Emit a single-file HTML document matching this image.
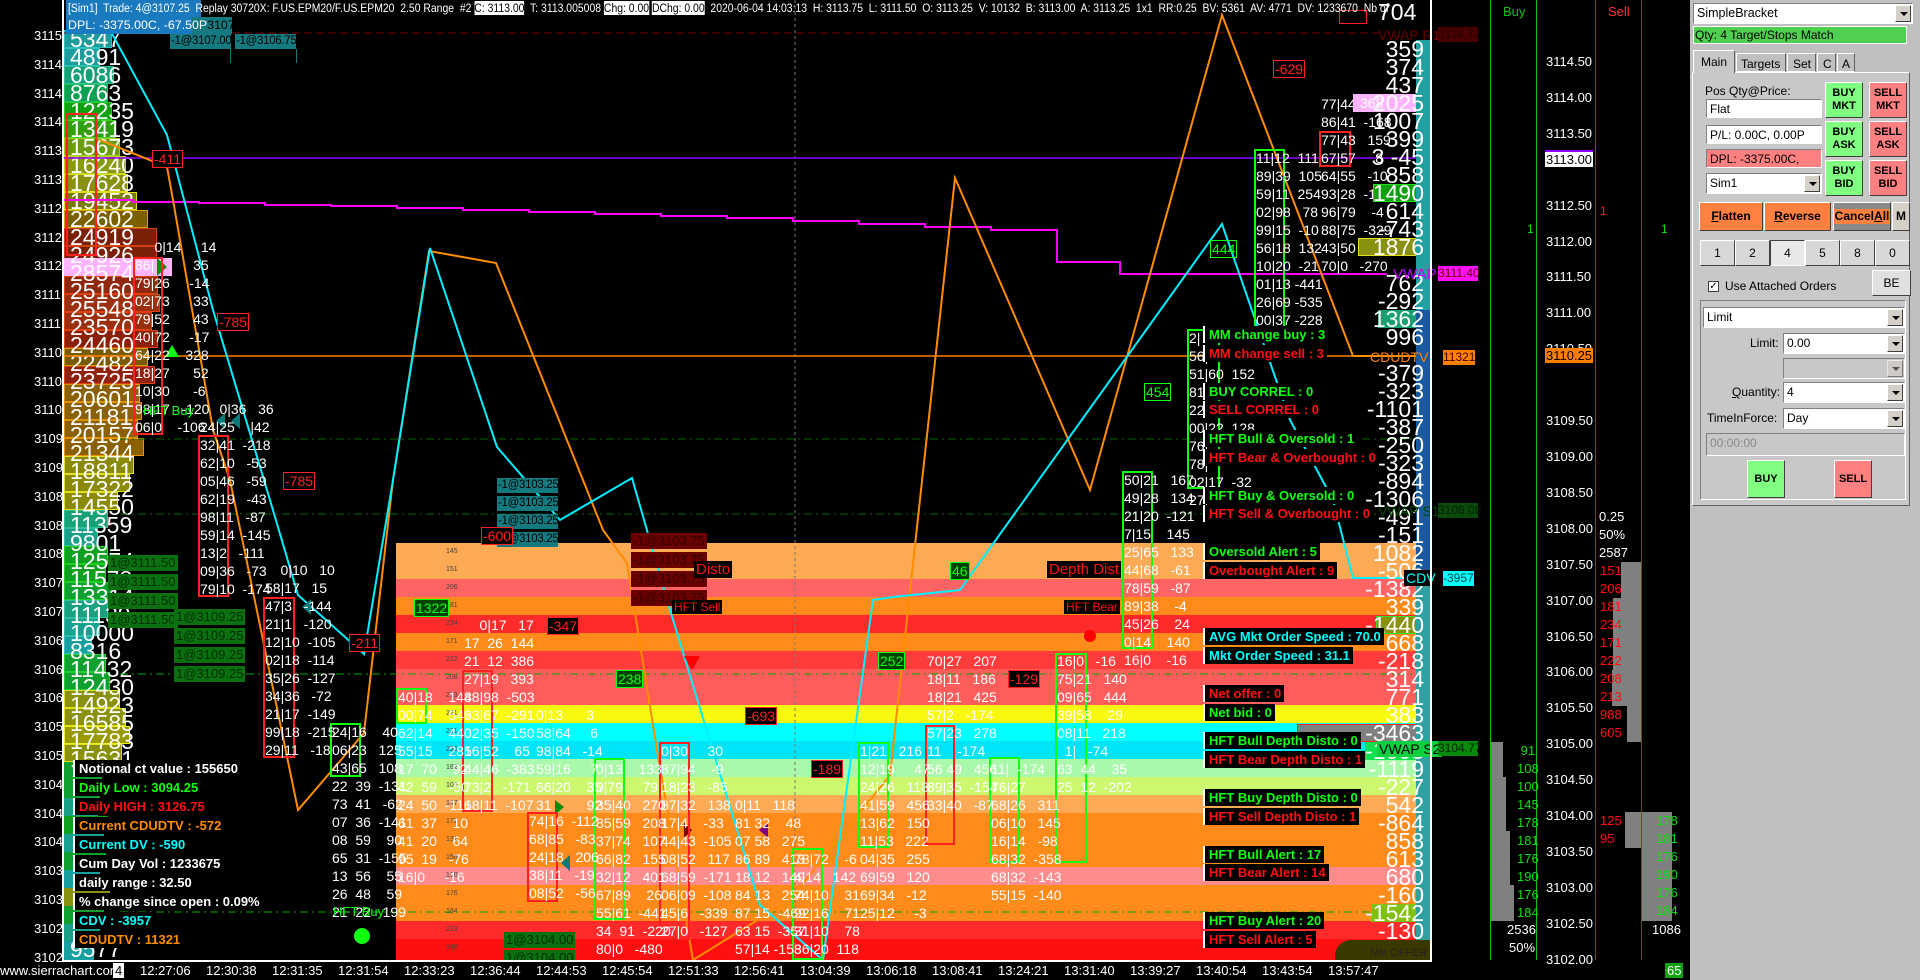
<!DOCTYPE html>
<html><head><meta charset="utf-8"><style>
*{margin:0;padding:0;box-sizing:border-box}
body{width:1920px;height:980px;background:#000;overflow:hidden;position:relative;font-family:"Liberation Sans",sans-serif;color:#fff}
i,b,s,u{position:absolute;font-style:normal;text-decoration:none;white-space:nowrap}
.c{position:absolute;white-space:pre;font-size:14px;line-height:18px;color:#fff}
.bx{position:absolute}
.pv{position:absolute;height:18px;left:64px}
.lb{position:absolute;background:#000;font-size:13px;font-weight:bold;line-height:17px;height:17px;padding:0 3px 0 4px;border-left:2px solid #fff}
.g{color:#10ff10}.r{color:#ff1010}.cy{color:#00ffff}.o{color:#ff8c00}
.pn{position:absolute;font-size:12px;color:#000;font-family:"Liberation Sans",sans-serif}
.in{position:absolute;background:#fff;border:1px solid #808080;border-right-color:#fff;border-bottom-color:#fff;font-size:12px;color:#000;padding:2px 3px;line-height:14px}
.btn{position:absolute;border:1px solid #fff;border-right-color:#404040;border-bottom-color:#404040;font-size:11px;font-weight:bold;color:#000;text-align:center;display:flex;align-items:center;justify-content:center;line-height:13px}
.arr{position:absolute;right:1px;top:1px;bottom:1px;width:16px;background:#d4d0c8;border:1px solid #fff;border-right-color:#404040;border-bottom-color:#404040}
.arr:after{content:"";position:absolute;left:4px;top:6px;border:4px solid transparent;border-top:4px solid #000}
.rb{position:absolute;border:1px solid #ff2020;color:#ff2020;font-size:14px;line-height:16px;padding:0 1px;background:#000}
.gb{position:absolute;border:1px solid #10ff10;color:#10ff10;font-size:14px;line-height:16px;padding:0 1px;background:#004000}
.tb{position:absolute;background:#147a80;color:#000;font-size:11.5px;line-height:15px;width:61px;overflow:hidden;padding:0 1px;letter-spacing:-0.3px}
.db{position:absolute;background:#6a0000;color:#300;font-size:13px;line-height:16px;padding:0 2px}
.gg{position:absolute;background:#0a7010;color:#003000;font-size:13px;line-height:16px;padding:0 2px}
.bnd{position:absolute;left:396px;width:1034px;height:18px}
</style></head><body>

<!-- bands -->
<div class="bnd" style="top:543px;background:#fdaa55"></div>
<div class="bnd" style="top:561px;background:#fdaa55"></div>
<div class="bnd" style="top:579px;background:#ff6464"></div>
<div class="bnd" style="top:597px;background:#ff8c1a"></div>
<div class="bnd" style="top:615px;background:#ff2a2a"></div>
<div class="bnd" style="top:633px;background:#ff8c1a"></div>
<div class="bnd" style="top:651px;background:#ff3c3c"></div>
<div class="bnd" style="top:669px;background:#ff5c5c"></div>
<div class="bnd" style="top:687px;background:#ff5c5c"></div>
<div class="bnd" style="top:705px;background:#f8f810"></div>
<div class="bnd" style="top:723px;background:#00ffff"></div>
<div class="bnd" style="top:741px;background:#00e4f8"></div>
<div class="bnd" style="top:759px;background:#aaf8aa"></div>
<div class="bnd" style="top:777px;background:#ccf870"></div>
<div class="bnd" style="top:795px;background:#fdaa55"></div>
<div class="bnd" style="top:813px;background:#ff8c1a"></div>
<div class="bnd" style="top:831px;background:#ff8c1a"></div>
<div class="bnd" style="top:849px;background:#ff8c1a"></div>
<div class="bnd" style="top:867px;background:#ff8c8c"></div>
<div class="bnd" style="top:885px;background:#ff8c1a"></div>
<div class="bnd" style="top:903px;background:#ff8c1a"></div>
<div class="bnd" style="top:921px;background:#ff2a2a"></div>
<div class="bnd" style="top:939px;background:#ff1010;height:21px"></div>
<div class="bx" style="left:1335px;top:940px;width:95px;height:20px;background:#3a3a00;border-radius:16px 0 0 0"></div>
<i style="left:1370px;top:947px;font-size:11px;color:#222">Net OFFER</i>
<div class="c" style="left:446px;top:543px;font-size:7px;color:#444;line-height:18px">145
151
206
181
234
171
222
208
213
221
231
250
182
100
147
178
131
156
160
176
184
233
248</div>

<!-- left price axis -->
<div class="bx" style="left:62px;top:0;width:2px;height:962px;background:#fff"></div>
<div class="c" style="left:34px;top:22px;font-size:13px;line-height:28.8px">3115
3114
3114
3114
3113
3113
3112
3112
3112
3111
3111
3110
3110
3110
3109
3109
3108
3108
3108
3107
3107
3106
3106
3106
3105
3105
3104
3104
3104
3103
3103
3102
3102</div>

<!-- left volume profile -->
<div class="pv" style="top:30px;width:48px;background:#1c9c9c;border:1px solid #30c0c0"></div>
<div class="pv" style="top:48px;width:36px;background:#1c9c9c;border:1px solid #30c0c0"></div>
<div class="pv" style="top:66px;width:50px;background:#14a078;border:1px solid #30c090"></div>
<div class="pv" style="top:84px;width:44px;background:#0ca050;border:1px solid #20c060"></div>
<div class="pv" style="top:102px;width:48px;background:#10a010;border:1px solid #20d020"></div>
<div class="pv" style="top:120px;width:52px;background:#30a010;border:1px solid #40d020"></div>
<div class="pv" style="top:138px;width:56px;background:#6a9c10;border:1px solid #a0d020"></div>
<div class="pv" style="top:156px;width:62px;background:#8a9a10;border:1px solid #c0d020"></div>
<div class="pv" style="top:174px;width:64px;background:#8a9010;border:1px solid #e0e020"></div>
<div class="pv" style="top:192px;width:73px;background:#7a7a08;border:1px solid #e0e020"></div>
<div class="pv" style="top:210px;width:84px;background:#7a6000;border:1px solid #d0a000"></div>
<div class="pv" style="top:228px;width:93px;background:#7a2008;border:1px solid #d04010"></div>
<div class="pv" style="top:246px;width:93px;background:#7a2008;border:1px solid #d04010"></div>
<div class="pv" style="top:258px;width:108px;background:#ffb4ff"></div>
<div class="pv" style="top:276px;width:94px;background:#902810;border:1px solid #e04010"></div>
<div class="pv" style="top:294px;width:96px;background:#9a3010;border:1px solid #e04010"></div>
<div class="pv" style="top:312px;width:88px;background:#9a3010;border:1px solid #e04010"></div>
<div class="pv" style="top:330px;width:94px;background:#8a2008;border:1px solid #e04010"></div>
<div class="pv" style="top:348px;width:84px;background:#7a5a00;border:1px solid #d0a000"></div>
<div class="pv" style="top:366px;width:91px;background:#902010;border:1px solid #e04010"></div>
<div class="pv" style="top:384px;width:76px;background:#8a6008;border:1px solid #e09000"></div>
<div class="pv" style="top:402px;width:78px;background:#8a6008;border:1px solid #e09000"></div>
<div class="pv" style="top:420px;width:74px;background:#8a6008;border:1px solid #e09000"></div>
<div class="pv" style="top:438px;width:80px;background:#8a6000;border:1px solid #f09000"></div>
<div class="pv" style="top:456px;width:70px;background:#8a8a08;border:1px solid #e0e020"></div>
<div class="pv" style="top:474px;width:66px;background:#8a8a08;border:1px solid #e0e020"></div>
<div class="pv" style="top:492px;width:54px;background:#8a8a08;border:1px solid #e0e020"></div>
<div class="pv" style="top:510px;width:44px;background:#18a078;border:1px solid #30c090"></div>
<div class="pv" style="top:528px;width:34px;background:#18a088;border:1px solid #30c0a0"></div>
<div class="pv" style="top:546px;width:44px;background:#10a020;border:1px solid #20d020"></div>
<div class="pv" style="top:564px;width:42px;background:#10a020;border:1px solid #20d020"></div>
<div class="pv" style="top:582px;width:48px;background:#10a030;border:1px solid #20d030"></div>
<div class="pv" style="top:600px;width:44px;background:#18a080;border:1px solid #30c0a0"></div>
<div class="pv" style="top:618px;width:36px;background:#18a090;border:1px solid #30c0a0"></div>
<div class="pv" style="top:636px;width:28px;background:#18a0a0;border:1px solid #30c0c0"></div>
<div class="pv" style="top:654px;width:42px;background:#10a030;border:1px solid #20d030"></div>
<div class="pv" style="top:672px;width:46px;background:#10a030;border:1px solid #20d030"></div>
<div class="pv" style="top:690px;width:56px;background:#8a9010;border:1px solid #e0e020"></div>
<div class="pv" style="top:708px;width:62px;background:#8a9010;border:1px solid #e0e020"></div>
<div class="pv" style="top:726px;width:66px;background:#9a9a08;border:1px solid #f0f020"></div>
<div class="pv" style="top:744px;width:58px;background:#8a9010;border:1px solid #e0e020"></div>
<div class="pv" style="top:762px;width:38px;background:#10a030"></div>
<div class="pv" style="top:780px;width:36px;background:#10a030"></div>
<div class="pv" style="top:798px;width:34px;background:#18a088"></div>
<div class="pv" style="top:816px;width:44px;background:#10a020"></div>
<div class="pv" style="top:834px;width:40px;background:#18a090"></div>
<div class="pv" style="top:852px;width:42px;background:#10a030"></div>
<div class="pv" style="top:870px;width:36px;background:#18a0a0"></div>
<div class="pv" style="top:888px;width:46px;background:#8a9010"></div>
<div class="pv" style="top:906px;width:40px;background:#10a030"></div>
<div class="pv" style="top:924px;width:36px;background:#18a088"></div>
<div class="pv" style="top:942px;width:30px;background:#18a0a0"></div>
<div class="c" style="left:70px;top:30px;font-size:23px;line-height:18px">5347
4891
6086
8763
12235
13419
15673
16240
17628
19452
22602
24919
24926
</div>
<div class="c" style="left:70px;top:264px;font-size:23px;line-height:18px">28574
25160
25548
23570
24460
22482
23725
20601
21181
20157
21344
18811
17322
14550
11359
9801
12574
11578
13314
11139
10000
8316
11432
12430
14923
16585
17783
15631</div>
<i style="left:70px;top:940px;font-size:23px;line-height:18px">9577</i>

<!-- lines -->
<svg style="position:absolute;left:0;top:0" width="1920" height="980">
<line x1="795" y1="0" x2="795" y2="960" stroke="#777" stroke-dasharray="3,3"/>
<line x1="64" y1="33" x2="1378" y2="33" stroke="#700" stroke-dasharray="8,4"/>
<line x1="120" y1="439" x2="1430" y2="439" stroke="#060" stroke-dasharray="8,4,2,4"/>
<line x1="120" y1="514" x2="1378" y2="514" stroke="#060" stroke-dasharray="8,4,2,4"/>
<line x1="120" y1="674" x2="1430" y2="674" stroke="#0a0" stroke-dasharray="8,4,2,4"/>
<line x1="120" y1="912" x2="1430" y2="912" stroke="#0a0" stroke-dasharray="8,4,2,4"/>
<line x1="64" y1="158" x2="1430" y2="158" stroke="#9000ff" stroke-width="1.5"/>
<line x1="64" y1="356" x2="1430" y2="356" stroke="#ff8000" stroke-width="1.5"/>
<polyline fill="none" stroke="#ff00ff" stroke-width="2" points="64,200 133,200 133,202 199,202 199,203 265,203 265,205 331,205 331,206 397,206 397,208 463,208 463,210 529,210 529,212 595,212 595,214 661,214 661,216 727,216 727,218 793,218 793,221 859,221 859,224 925,224 925,227 991,227 991,230 1057,230 1057,262 1120,262 1120,274 1387,274"/>
<polyline fill="none" stroke="#ff8c00" stroke-width="2" points="100,140 167,167 173,200 213,430 230,480 298,810 364,733 393,480 429,251 496,263 603,530 627,563 657,750 693,960 790,900 890,775 955,178 1090,490 1222,15 1353,356 1430,356"/>
<polyline fill="none" stroke="#00f0ff" stroke-width="2" points="110,30 167,135 213,310 270,500 298,595 364,654 393,480 430,248 497,447 560,520 632,478 667,600 760,905 823,960 873,600 893,597 960,590 1222,224 1290,420 1333,500 1353,578 1404,578"/>
<circle cx="1090" cy="636" r="6" fill="#ff0000"/>
<circle cx="362" cy="936" r="8" fill="#10ff10"/>
<polygon points="157,258 167,267 157,276" fill="#0a8a0a"/>
<polygon points="172,345 165,357 179,357" fill="#10ff10"/>
<polygon points="225,413 216,421 225,429" fill="#0a7a7a"/>
<polygon points="240,413 231,421 240,429" fill="#0a7a7a"/>
<polygon points="311,599 302,607 311,615" fill="#0a7a7a"/>
<polygon points="555,800 564,807 555,815" fill="#0a8a0a"/>
<polygon points="570,855 561,863 570,871" fill="#0a7a7a"/>
<polygon points="684,823 692,830 684,838" fill="#700"/>
<polygon points="768,823 759,830 768,838" fill="#800080"/>
<polygon points="684,656 700,656 692,670" fill="#f00"/>
</svg>

<!-- boxes columns -->
<div class="bx" style="left:66px;top:113px;width:31px;height:143px;border:2px solid #ff2020"></div>
<div class="bx" style="left:133px;top:257px;width:30px;height:178px;border:2px solid #ff2020"></div>
<div class="bx" style="left:198px;top:435px;width:31px;height:162px;border:2px solid #ff2020"></div>
<div class="bx" style="left:263px;top:597px;width:32px;height:161px;border:2px solid #ff2020"></div>
<div class="bx" style="left:330px;top:723px;width:31px;height:54px;border:2px solid #10ff10"></div>
<div class="bx" style="left:396px;top:688px;width:31px;height:36px;border:2px solid #10ff10"></div>
<div class="bx" style="left:462px;top:670px;width:31px;height:142px;border:2px solid #ff2020"></div>
<div class="bx" style="left:527px;top:812px;width:31px;height:90px;border:2px solid #ff2020"></div>
<div class="bx" style="left:594px;top:758px;width:31px;height:162px;border:2px solid #10ff10"></div>
<div class="bx" style="left:659px;top:742px;width:31px;height:198px;border:2px solid #ff2020"></div>
<div class="bx" style="left:792px;top:848px;width:31px;height:112px;border:2px solid #10ff10"></div>
<div class="bx" style="left:858px;top:742px;width:31px;height:106px;border:2px solid #10ff10"></div>
<div class="bx" style="left:925px;top:725px;width:30px;height:120px;border:2px solid #ff2020"></div>
<div class="bx" style="left:989px;top:757px;width:31px;height:106px;border:2px solid #10ff10"></div>
<div class="bx" style="left:1055px;top:653px;width:32px;height:210px;border:2px solid #10ff10"></div>
<div class="bx" style="left:1122px;top:471px;width:31px;height:178px;border:2px solid #10ff10"></div>
<div class="bx" style="left:1187px;top:329px;width:33px;height:160px;border:2px solid #10ff10"></div>
<div class="bx" style="left:1254px;top:149px;width:31px;height:182px;border:2px solid #10ff10"></div>
<div class="bx" style="left:1319px;top:131px;width:32px;height:36px;border:2px solid #ff2020"></div>

<div class="c" style="left:135px;top:238px">     0|14     14
86|          35
79|26     -14
02|73      33
79|52      43
40|72     -17
64|22    328
18|27      52
10|30      -6
98|17   -120
06|0    -106</div>
<div class="c" style="left:200px;top:400px">     0|36   36
24|25    |42
32|41  -218
62|10   -53
05|46   -59
62|19   -43
98|11   -87
59|14  -145
13|2   -111
09|36   -73
79|10  -174</div>
<div class="c" style="left:265px;top:561px">    0|10   10
58|17   15
47|3   -144
21|1   -120
12|10  -105
02|18  -114
35|26  -127
34|36   -72
21|17  -149
99|18  -215
29|11   -18</div>
<div class="c" style="left:332px;top:723px">24|16    40
06|23   125
43|65   108
22  39  -131
73  41   -62
07  36  -141
08  59    90
65  31  -155
13  56    55
26  48    59
21  22   199</div>
<div class="c" style="left:398px;top:688px">40|18    144
00|74    549
62|14    440
55|15    281
17  70    92
42  59   -50
24  50  -116
61  37    10
41  20    64
95  19   -76
16|0     -16</div>
<div class="c" style="left:464px;top:616px">    0|17   17
17  26  144
21  12  386
27|19   393
88|98  -503
63|67  -291
02|35  -150
56|52    65
44|46  -383
73|2   -171
18|11  -107</div>
<div class="c" style="left:536px;top:706px">0|13      3
58|64     6
98|84   -14
59|16     7
66|20    35
31         92</div>
<div class="c" style="left:529px;top:812px">74|16  -112
68|85   -83
24|18   206
38|11   -19
08|52   -56</div>
<div class="c" style="left:596px;top:760px">0|13    133
0|79     79
35|40   270
85|59   208
37|74   107
66|82   155
32|12   401
67|89    26
55|61  -441
34  91  -220
80|0   -480</div>
<div class="c" style="left:661px;top:742px">0|30     30
87|94    -9
18|23   -85
87|32   138
17|4    -33
44|43  -105
08|52   117
68|59  -171
06|09  -108
45|6   -339
27|0   -127</div>
<div class="c" style="left:735px;top:796px">0|11   118
81 32    48
07 58   275
86 89   413
18 12   149
84 13   254
87 15  -469
63 15  -357
57|14 -153</div>
<div class="c" style="left:794px;top:850px">78|72    -6
4|14   142
74|10    31
92|16    71
31|10    78
86|20  118</div>
<div class="c" style="left:860px;top:742px">1|21   216
12|19     47
24|26   118
41|59   456
13|62   150
11|53   222
04|35   255
69|59   120
69|34   -12
25|12     -3</div>
<div class="c" style="left:927px;top:652px">70|27   207
18|11   186
18|21   425
57|2   -174
57|23   278
11    -174
56 49   456
89|35  -154
33|40   -87</div>
<div class="c" style="left:991px;top:760px">11|  -174
76|27   
68|26   311
06|10   145
16|14   -98
68|32  -358
68|32  -143
55|15  -140</div>
<div class="c" style="left:1057px;top:652px">16|0   -16
75|21   140
09|65   444
39|58    29
08|11   218
  1|   -74
63  44    35
25  12  -202</div>
<div class="c" style="left:1124px;top:471px">50|21   167
49|28   134
21|20  -121
7|15    145
25|65   133
44|68   -61
78|59   -87
89|38    -4
45|26    24
0|14    140
16|0    -16</div>
<div class="c" style="left:1189px;top:329px">2|
56|
51|60  152
81|
22|
00|22  128
76|
78|
02|17  -32
27|</div>
<div class="c" style="left:1256px;top:149px">11|12  111
89|39  105
59|11  254
02|98   78
99|15  -10
56|18  132
10|20  -21
01|13 -441
26|69 -535
00|37 -228</div>
<div class="c" style="left:1321px;top:95px">77|44
86|41  -168
77|43   159
67|57     8
64|55   -10
93|28  -105
96|79    -4
88|75  -329
43|50  -239
70|0   -270</div>

<!-- right delta column -->
<div class="bx" style="left:1353px;top:94px;width:77px;height:18px;background:#ffb4ff"></div>
<i style="left:1360px;top:95px;font-size:14px;color:#fff">368</i>
<div class="bx" style="left:1373px;top:184px;width:57px;height:18px;background:#10a010;border:1px solid #20e020"></div>
<div class="bx" style="left:1358px;top:238px;width:72px;height:18px;background:#8a9010;border:1px solid #e0e020"></div>
<div class="bx" style="left:1378px;top:310px;width:52px;height:18px;background:#18a070"></div>
<div class="bx" style="left:1376px;top:616px;width:54px;height:18px;background:#8a9010;border:1px solid #30e030"></div>
<div class="bx" style="left:1297px;top:724px;width:133px;height:18px;background:#808080;border:1px solid #ff2020"></div>
<div class="bx" style="left:1365px;top:742px;width:65px;height:18px;background:#10e050"></div>
<div class="bx" style="left:1371px;top:904px;width:59px;height:18px;background:#80c010"></div>
<div class="bx" style="left:1416px;top:40px;width:14px;height:900px;background:linear-gradient(#20a0a0 0 12%,#20a0a0 12% 30%,#1a5aa0 30% 60%,#30a0a0 60% 100%)"></div>
<div class="c" style="left:1300px;top:40px;width:124px;text-align:right;font-size:23px;line-height:18px">359
374
437
2025
1007
399
3 -45
858
1490
614
-743
1876

762
-292
1362
996

-379
-323
-1101
-387
-250
-323
-894
-1306
-491
-151
1082
-506
-1382
339
-1440
668
-218
314
771
383
-3463
-1003
-1119
-227
542
-864
858
613
680
-160
-1542
-130</div>
<i style="left:1378px;top:3px;font-size:23px;line-height:18px">704</i>
<div class="bx" style="left:1339px;top:10px;width:28px;height:14px;border:1px solid #ff2020"></div>

<!-- chart labels -->
<i style="left:1378px;top:27px;font-size:14px;color:#600">VWAP R1</i>
<i style="left:1393px;top:266px;font-size:15px;color:#c000ff">VWAP</i>
<i style="left:1370px;top:349px;font-size:14px;color:#ff8000">CDUDTV</i>
<i style="left:1378px;top:503px;font-size:14px;color:#040">VWAP S1</i>
<i style="left:1404px;top:570px;font-size:14px;color:#00ffff;background:#000;padding:0 2px">CDV</i>
<i style="left:1377px;top:741px;font-size:14px;color:#000;background:#10d040;padding:0 2px">VWAP S2</i>

<div class="lb g" style="left:1203px;top:326px">MM change buy : 3</div>
<div class="lb r" style="left:1203px;top:345px">MM change sell : 3</div>
<div class="lb g" style="left:1203px;top:383px">BUY CORREL :   0</div>
<div class="lb r" style="left:1203px;top:401px">SELL CORREL :   0</div>
<div class="lb g" style="left:1203px;top:430px">HFT Bull &amp; Oversold : 1</div>
<div class="lb r" style="left:1203px;top:449px">HFT Bear &amp; Overbought : 0</div>
<div class="lb g" style="left:1203px;top:487px">HFT Buy &amp; Oversold : 0</div>
<div class="lb r" style="left:1203px;top:505px">HFT Sell &amp; Overbought : 0</div>
<div class="lb g" style="left:1203px;top:543px">Oversold Alert : 5</div>
<div class="lb r" style="left:1203px;top:562px">Overbought Alert : 9</div>
<div class="lb cy" style="left:1203px;top:628px">AVG Mkt Order Speed : 70.0</div>
<div class="lb cy" style="left:1203px;top:647px">Mkt Order Speed : 31.1</div>
<div class="lb r" style="left:1203px;top:685px">Net offer : 0</div>
<div class="lb g" style="left:1203px;top:704px">Net bid :   0</div>
<div class="lb g" style="left:1203px;top:732px">HFT Bull Depth Disto : 0</div>
<div class="lb r" style="left:1203px;top:751px">HFT Bear Depth Disto : 1</div>
<div class="lb g" style="left:1203px;top:789px">HFT Buy Depth Disto : 0</div>
<div class="lb r" style="left:1203px;top:808px">HFT Sell Depth Disto : 1</div>
<div class="lb g" style="left:1203px;top:846px">HFT Bull Alert : 17</div>
<div class="lb r" style="left:1203px;top:864px">HFT Bear Alert : 14</div>
<div class="lb g" style="left:1203px;top:912px">HFT Buy Alert : 20</div>
<div class="lb r" style="left:1203px;top:931px">HFT Sell Alert : 5</div>

<div class="lb" style="left:73px;top:760px;color:#fff">Notional ct value :  155650</div>
<div class="lb g" style="left:73px;top:779px">Daily Low :  3094.25</div>
<div class="lb r" style="left:73px;top:798px">Daily HIGH :  3126.75</div>
<div class="lb o" style="left:73px;top:817px">Current CDUDTV :  -572</div>
<div class="lb cy" style="left:73px;top:836px">Current DV :           -590</div>
<div class="lb" style="left:73px;top:855px;color:#fff">Cum Day Vol :  1233675</div>
<div class="lb" style="left:73px;top:874px;color:#fff">daily range :  32.50</div>
<div class="lb" style="left:73px;top:893px;color:#fff">% change since open :  0.09%</div>
<div class="lb cy" style="left:73px;top:912px">CDV :           -3957</div>
<div class="lb o" style="left:73px;top:931px">CDUDTV :  11321</div>

<!-- order labels -->
<div class="tb" style="left:170px;top:34px">-1@3107.00</div>
<div class="tb" style="left:235px;top:34px">-1@3106.75</div>
<div class="bx" style="left:230px;top:49px;width:1px;height:14px;background:#147a80"></div>
<div class="bx" style="left:296px;top:49px;width:1px;height:14px;background:#147a80"></div>
<div class="tb" style="left:497px;top:478px">-1@3103.25</div>
<div class="tb" style="left:497px;top:496px">-1@3103.25</div>
<div class="tb" style="left:497px;top:514px">-1@3103.25</div>
<div class="tb" style="left:497px;top:532px">-1@3103.25</div>
<div class="db" style="left:631px;top:533px">-1@3103.75</div>
<div class="db" style="left:631px;top:552px">-1@3103.75</div>
<div class="db" style="left:631px;top:571px">-1@3103.75</div>
<div class="db" style="left:631px;top:590px">-1@3103.75</div>
<i style="left:694px;top:561px;font-size:15px;color:#ff1010;background:#000;padding:0 2px">Disto</i>
<i style="left:672px;top:600px;font-size:12px;color:#ff1010;background:#000;padding:0 2px">HFT Sell</i>
<i style="left:1047px;top:561px;font-size:15px;color:#ff1010;background:#000;padding:0 2px">Depth Dist</i>
<i style="left:1064px;top:600px;font-size:12px;color:#ff1010;background:#000;padding:0 2px">HFT Bear</i>
<div class="gg" style="left:108px;top:555px">1@3111.50</div>
<div class="gg" style="left:108px;top:574px">1@3111.50</div>
<div class="gg" style="left:108px;top:593px">1@3111.50</div>
<div class="gg" style="left:108px;top:612px">1@3111.50</div>
<div class="gg" style="left:174px;top:609px">1@3109.25</div>
<div class="gg" style="left:174px;top:628px">1@3109.25</div>
<div class="gg" style="left:174px;top:647px">1@3109.25</div>
<div class="gg" style="left:174px;top:666px">1@3109.25</div>
<div class="gg" style="left:504px;top:932px">1@3104.00</div>
<div class="gg" style="left:504px;top:950px;height:10px;overflow:hidden">1@3104.00</div>
<i style="left:143px;top:403px;font-size:13px;color:#10ff10">HFT Buy</i>
<i style="left:333px;top:904px;font-size:13px;color:#10ff10">HFT Buy</i>

<div class="rb" style="left:152px;top:150px">-411</div>
<div class="rb" style="left:217px;top:313px">-785</div>
<div class="rb" style="left:283px;top:472px">-785</div>
<div class="rb" style="left:349px;top:634px">-211</div>
<div class="rb" style="left:481px;top:527px">-600</div>
<div class="rb" style="left:547px;top:617px">-347</div>
<div class="rb" style="left:745px;top:707px">-693</div>
<div class="rb" style="left:811px;top:760px">-189</div>
<div class="rb" style="left:1008px;top:670px">-129</div>
<div class="rb" style="left:1273px;top:60px">-629</div>
<div class="gb" style="left:414px;top:599px">1322</div>
<div class="gb" style="left:616px;top:670px">238</div>
<div class="gb" style="left:950px;top:562px">46</div>
<div class="gb" style="left:878px;top:652px">252</div>
<div class="gb" style="left:1144px;top:383px;background:none">454</div>
<div class="gb" style="left:1210px;top:240px;background:none">444</div>

<!-- header -->
<i style="left:66px;top:0;height:17px;width:135px;background:#1a7ac0"></i>
<i style="left:66px;top:17px;height:17px;width:126px;background:#1a7ac0"></i>
<i style="left:192px;top:17px;height:17px;width:40px;background:#147a80"></i>
<i style="left:68px;top:1px;font-size:12.4px;transform:scaleX(0.84);transform-origin:0 0">[Sim1]&nbsp; Trade: 4@3107.25&nbsp; Replay 30720X: F.US.EPM20/F.US.EPM20&nbsp; 2.50 Range&nbsp; #2 <span style="background:#fff;color:#000">C: 3113.00</span>&nbsp; T: 3113.005008 <span style="background:#fff;color:#000">Chg: 0.00</span> <span style="background:#fff;color:#000">DChg: 0.00</span>&nbsp; 2020-06-04 14:03:13&nbsp; H: 3113.75&nbsp; L: 3111.50&nbsp; O: 3113.25&nbsp; V: 10132&nbsp; B: 3113.00&nbsp; A: 3113.25&nbsp; 1x1&nbsp; RR:0.25&nbsp; BV: 5361&nbsp; AV: 4771&nbsp; DV: 1233670&nbsp; Nb of</i>
<i style="left:68px;top:18px;font-size:12.4px">DPL: -3375.00C, -67.50P<span style="color:#000">3107.00</span></i>

<!-- chart borders -->
<div class="bx" style="left:64px;top:960px;width:1368px;height:2px;background:#fff"></div>
<div class="bx" style="left:1430px;top:0;width:2px;height:962px;background:#fff"></div>

<!-- time axis -->
<i style="left:0;top:963px;font-size:13px">www.sierrachart.com</i>
<i style="left:113px;top:963px;font-size:13px;background:#fff;color:#000;padding:0 2px">4</i>
<i style="left:140px;top:963px;font-size:13px">12:27:06</i>
<i style="left:206px;top:963px;font-size:13px">12:30:38</i>
<i style="left:272px;top:963px;font-size:13px">12:31:35</i>
<i style="left:338px;top:963px;font-size:13px">12:31:54</i>
<i style="left:404px;top:963px;font-size:13px">12:33:23</i>
<i style="left:470px;top:963px;font-size:13px">12:36:44</i>
<i style="left:536px;top:963px;font-size:13px">12:44:53</i>
<i style="left:602px;top:963px;font-size:13px">12:45:54</i>
<i style="left:668px;top:963px;font-size:13px">12:51:33</i>
<i style="left:734px;top:963px;font-size:13px">12:56:41</i>
<i style="left:800px;top:963px;font-size:13px">13:04:39</i>
<i style="left:866px;top:963px;font-size:13px">13:06:18</i>
<i style="left:932px;top:963px;font-size:13px">13:08:41</i>
<i style="left:998px;top:963px;font-size:13px">13:24:21</i>
<i style="left:1064px;top:963px;font-size:13px">13:31:40</i>
<i style="left:1130px;top:963px;font-size:13px">13:39:27</i>
<i style="left:1196px;top:963px;font-size:13px">13:40:54</i>
<i style="left:1262px;top:963px;font-size:13px">13:43:54</i>
<i style="left:1328px;top:963px;font-size:13px">13:57:47</i>

<!-- price boxes -->
<i style="left:1438px;top:27px;width:40px;height:15px;background:#4a0000;color:#200;font-size:12px;line-height:15px">3114.72</i>
<i style="left:1438px;top:266px;width:40px;height:15px;background:#ff10ff;color:#600;font-size:12px;line-height:15px">3111.40</i>
<i style="left:1443px;top:350px;width:32px;height:15px;background:#ff8000;color:#400;font-size:12px;line-height:15px">11321</i>
<i style="left:1438px;top:503px;width:40px;height:15px;background:#0a4a0a;color:#020;font-size:12px;line-height:15px">3108.08</i>
<i style="left:1443px;top:571px;width:31px;height:15px;background:#00ffff;color:#044;font-size:12px;line-height:15px">-3957</i>
<i style="left:1438px;top:741px;width:40px;height:15px;background:#0a8a0a;color:#020;font-size:12px;line-height:15px">3104.77</i>

<!-- buy/sell columns -->
<div class="bx" style="left:1490px;top:0;width:1px;height:960px;background:#10c010"></div>
<div class="bx" style="left:1536px;top:0;width:1px;height:960px;background:#10c010"></div>
<div class="bx" style="left:1595px;top:0;width:1px;height:960px;background:#e01010"></div>
<div class="bx" style="left:1641px;top:0;width:1px;height:960px;background:#e01010"></div>
<i style="left:1503px;top:4px;font-size:13px;color:#10c010">Buy</i>
<i style="left:1608px;top:4px;font-size:13px;color:#ff3030">Sell</i>
<i style="left:1527px;top:222px;font-size:12px;color:#10e010">1</i>
<i style="left:1600px;top:204px;font-size:12px;color:#ff1010">1</i>
<i style="left:1661px;top:222px;font-size:12px;color:#10e010">1</i>
<div class="bx" style="left:1491px;top:742px;width:12px;height:35px;background:#808080"></div>
<div class="bx" style="left:1491px;top:777px;width:15px;height:54px;background:#808080"></div>
<div class="bx" style="left:1491px;top:831px;width:19px;height:54px;background:#808080"></div>
<div class="bx" style="left:1491px;top:885px;width:23px;height:36px;background:#808080"></div>
<div class="c" style="left:1517px;top:742px;font-size:13px;color:#10e010"> 91
108
100
145
178
181
176
190
176
184</div>
<i style="left:1507px;top:922px;font-size:13px">2536</i>
<i style="left:1509px;top:940px;font-size:13px">50%</i>
<div class="bx" style="left:1621px;top:562px;width:20px;height:36px;background:#808080"></div>
<div class="bx" style="left:1613px;top:598px;width:28px;height:72px;background:#808080"></div>
<div class="bx" style="left:1612px;top:670px;width:29px;height:36px;background:#808080"></div>
<div class="bx" style="left:1627px;top:706px;width:14px;height:36px;background:#808080"></div>
<div class="c" style="left:1600px;top:562px;font-size:13px;color:#ff1010">151
206
181
234
171
222
208
213
988
605</div>
<i style="left:1599px;top:509px;font-size:13px">0.25</i>
<i style="left:1599px;top:527px;font-size:13px">50%</i>
<i style="left:1599px;top:545px;font-size:13px">2587</i>
<div class="bx" style="left:1625px;top:812px;width:16px;height:36px;background:#808080"></div>
<i style="left:1600px;top:813px;font-size:13px;color:#ff1010">125</i>
<i style="left:1600px;top:831px;font-size:13px;color:#ff1010">95</i>
<div class="bx" style="left:1642px;top:812px;width:30px;height:109px;background:#808080"></div>
<div class="c" style="left:1656px;top:812px;font-size:13px;color:#10e010">178
181
176
190
176
184</div>
<i style="left:1652px;top:922px;font-size:13px">1086</i>
<div class="c" style="left:1546px;top:44px;font-size:13px;line-height:35.9px">3114.50
3114.00
3113.50

3112.50
3112.00
3111.50
3111.00
3110.50

3109.50
3109.00
3108.50
3108.00
3107.50
3107.00
3106.50
3106.00
3105.50
3105.00
3104.50
3104.00
3103.50
3103.00
3102.50
3102.00</div>
<i style="left:1545px;top:150px;font-size:13px;background:#fff;color:#000;padding:0 1px;border-top:2px solid #9000ff">3113.00</i>
<i style="left:1545px;top:348px;font-size:13px;background:#ff8000;color:#000;padding:0 1px">3110.25</i>
<i style="left:1665px;top:963px;font-size:13px;background:#10a010;color:#fff;padding:0 2px">65</i>

<!-- right panel -->
<div class="bx" style="left:1690px;top:0;width:230px;height:980px;background:#c0c0c0"></div>
<div class="in" style="left:1693px;top:3px;width:220px;height:21px;font-size:12.5px">SimpleBracket<div class="arr"></div></div>
<div class="bx" style="left:1693px;top:26px;width:214px;height:18px;background:#50d050;border:1px solid #fff;font-size:12px;color:#000;padding:1px 1px;line-height:14px">Qty: 4 Target/Stops Match</div>
<div class="bx" style="left:1692px;top:72px;width:218px;height:434px;border:1px solid #fff;border-right-color:#606060;border-bottom-color:#606060;background:#c8c8c8"></div>
<div class="bx" style="left:1693px;top:50px;width:42px;height:23px;background:#c8c8c8;border:1px solid #fff;border-bottom:none;border-right-color:#606060;font-size:12px;color:#000;padding:4px 0 0 7px">Main</div>
<div class="bx" style="left:1736px;top:53px;width:50px;height:19px;background:#c0c0c0;border:1px solid #fff;border-right-color:#606060;font-size:12px;color:#000;padding:3px 0 0 4px">Targets</div>
<div class="bx" style="left:1787px;top:53px;width:29px;height:19px;background:#c0c0c0;border:1px solid #fff;border-right-color:#606060;font-size:12px;color:#000;padding:3px 0 0 5px">Set</div>
<div class="bx" style="left:1817px;top:53px;width:19px;height:19px;background:#c0c0c0;border:1px solid #fff;border-right-color:#606060;font-size:12px;color:#000;padding:3px 0 0 5px">C</div>
<div class="bx" style="left:1837px;top:53px;width:18px;height:19px;background:#c0c0c0;border:1px solid #fff;border-right-color:#606060;font-size:12px;color:#000;padding:3px 0 0 4px">A</div>
<i class="pn" style="left:1705px;top:84px">Pos Qty@Price:</i>
<div class="in" style="left:1706px;top:99px;width:116px;height:19px">Flat</div>
<div class="in" style="left:1706px;top:125px;width:116px;height:19px">P/L: 0.00C, 0.00P</div>
<div class="in" style="left:1706px;top:149px;width:116px;height:19px;background:#ff8080">DPL: -3375.00C,</div>
<div class="in" style="left:1706px;top:173px;width:116px;height:21px">Sim1<div class="arr"></div></div>
<div class="btn" style="left:1825px;top:82px;width:38px;height:36px;background:#80ff80">BUY<br>MKT</div>
<div class="btn" style="left:1869px;top:82px;width:38px;height:36px;background:#ff8080">SELL<br>MKT</div>
<div class="btn" style="left:1825px;top:121px;width:38px;height:36px;background:#80ff80">BUY<br>ASK</div>
<div class="btn" style="left:1869px;top:121px;width:38px;height:36px;background:#ff8080">SELL<br>ASK</div>
<div class="btn" style="left:1825px;top:160px;width:38px;height:36px;background:#80ff80">BUY<br>BID</div>
<div class="btn" style="left:1869px;top:160px;width:38px;height:36px;background:#ff8080">SELL<br>BID</div>
<div class="btn" style="left:1699px;top:202px;width:64px;height:29px;background:#ff8040;font-size:12px"><u style="position:static;text-decoration:underline">F</u>latten</div>
<div class="btn" style="left:1764px;top:202px;width:67px;height:29px;background:#ff8040;font-size:12px"><u style="position:static;text-decoration:underline">R</u>everse</div>
<div class="btn" style="left:1833px;top:202px;width:58px;height:29px;background:#8a8a8a;font-size:12px"><span style="background:#ff8040;padding:1px 1px">Cancel<u style="position:static;text-decoration:underline">A</u>ll</span></div>
<div class="btn" style="left:1892px;top:202px;width:18px;height:29px;background:#d4d0c8;font-size:12px">M</div>
<div class="btn" style="left:1700px;top:240px;width:35px;height:26px;background:#d8d8d8;font-weight:normal;font-size:12px">1</div>
<div class="btn" style="left:1735px;top:240px;width:35px;height:26px;background:#d8d8d8;font-weight:normal;font-size:12px">2</div>
<div class="btn" style="left:1770px;top:240px;width:35px;height:26px;background:#e8e8e8;font-weight:normal;font-size:12px;border-color:#404040 #fff #fff #404040">4</div>
<div class="btn" style="left:1805px;top:240px;width:35px;height:26px;background:#d8d8d8;font-weight:normal;font-size:12px">5</div>
<div class="btn" style="left:1840px;top:240px;width:35px;height:26px;background:#d8d8d8;font-weight:normal;font-size:12px">8</div>
<div class="btn" style="left:1875px;top:240px;width:35px;height:26px;background:#d8d8d8;font-weight:normal;font-size:12px">0</div>
<div class="bx" style="left:1708px;top:281px;width:11px;height:11px;background:#fff;border:1px solid #404040;font-size:10px;color:#000;line-height:9px;text-align:center">✓</div>
<i class="pn" style="left:1725px;top:279px">Use Attached Orders</i>
<div class="btn" style="left:1872px;top:270px;width:39px;height:26px;background:#e0e0e0;font-weight:normal;font-size:12px">BE</div>
<div class="bx" style="left:1700px;top:300px;width:206px;height:200px;border:1px solid #808080;border-right-color:#fff;border-bottom-color:#fff"></div>
<div class="in" style="left:1703px;top:307px;width:202px;height:21px">Limit<div class="arr"></div></div>
<i class="pn" style="left:1750px;top:336px">Limit:</i>
<div class="in" style="left:1783px;top:333px;width:122px;height:21px">0.00<div class="arr"></div></div>
<div class="in" style="left:1783px;top:358px;width:122px;height:21px;background:#c8c8c8"><div class="arr" style="opacity:.6"></div></div>
<i class="pn" style="left:1732px;top:385px"><u style="position:static;text-decoration:underline">Q</u>uantity:</i>
<div class="in" style="left:1783px;top:382px;width:122px;height:21px">4<div class="arr"></div></div>
<i class="pn" style="left:1707px;top:411px">TimeInForce:</i>
<div class="in" style="left:1783px;top:408px;width:122px;height:21px">Day<div class="arr"></div></div>
<div class="in" style="left:1706px;top:433px;width:199px;height:23px;background:#c8c8c8;color:#888">00:00:00</div>
<div class="btn" style="left:1747px;top:460px;width:38px;height:38px;background:#80ff80">BUY</div>
<div class="btn" style="left:1834px;top:460px;width:38px;height:38px;background:#ff8080">SELL</div>
</body></html>
